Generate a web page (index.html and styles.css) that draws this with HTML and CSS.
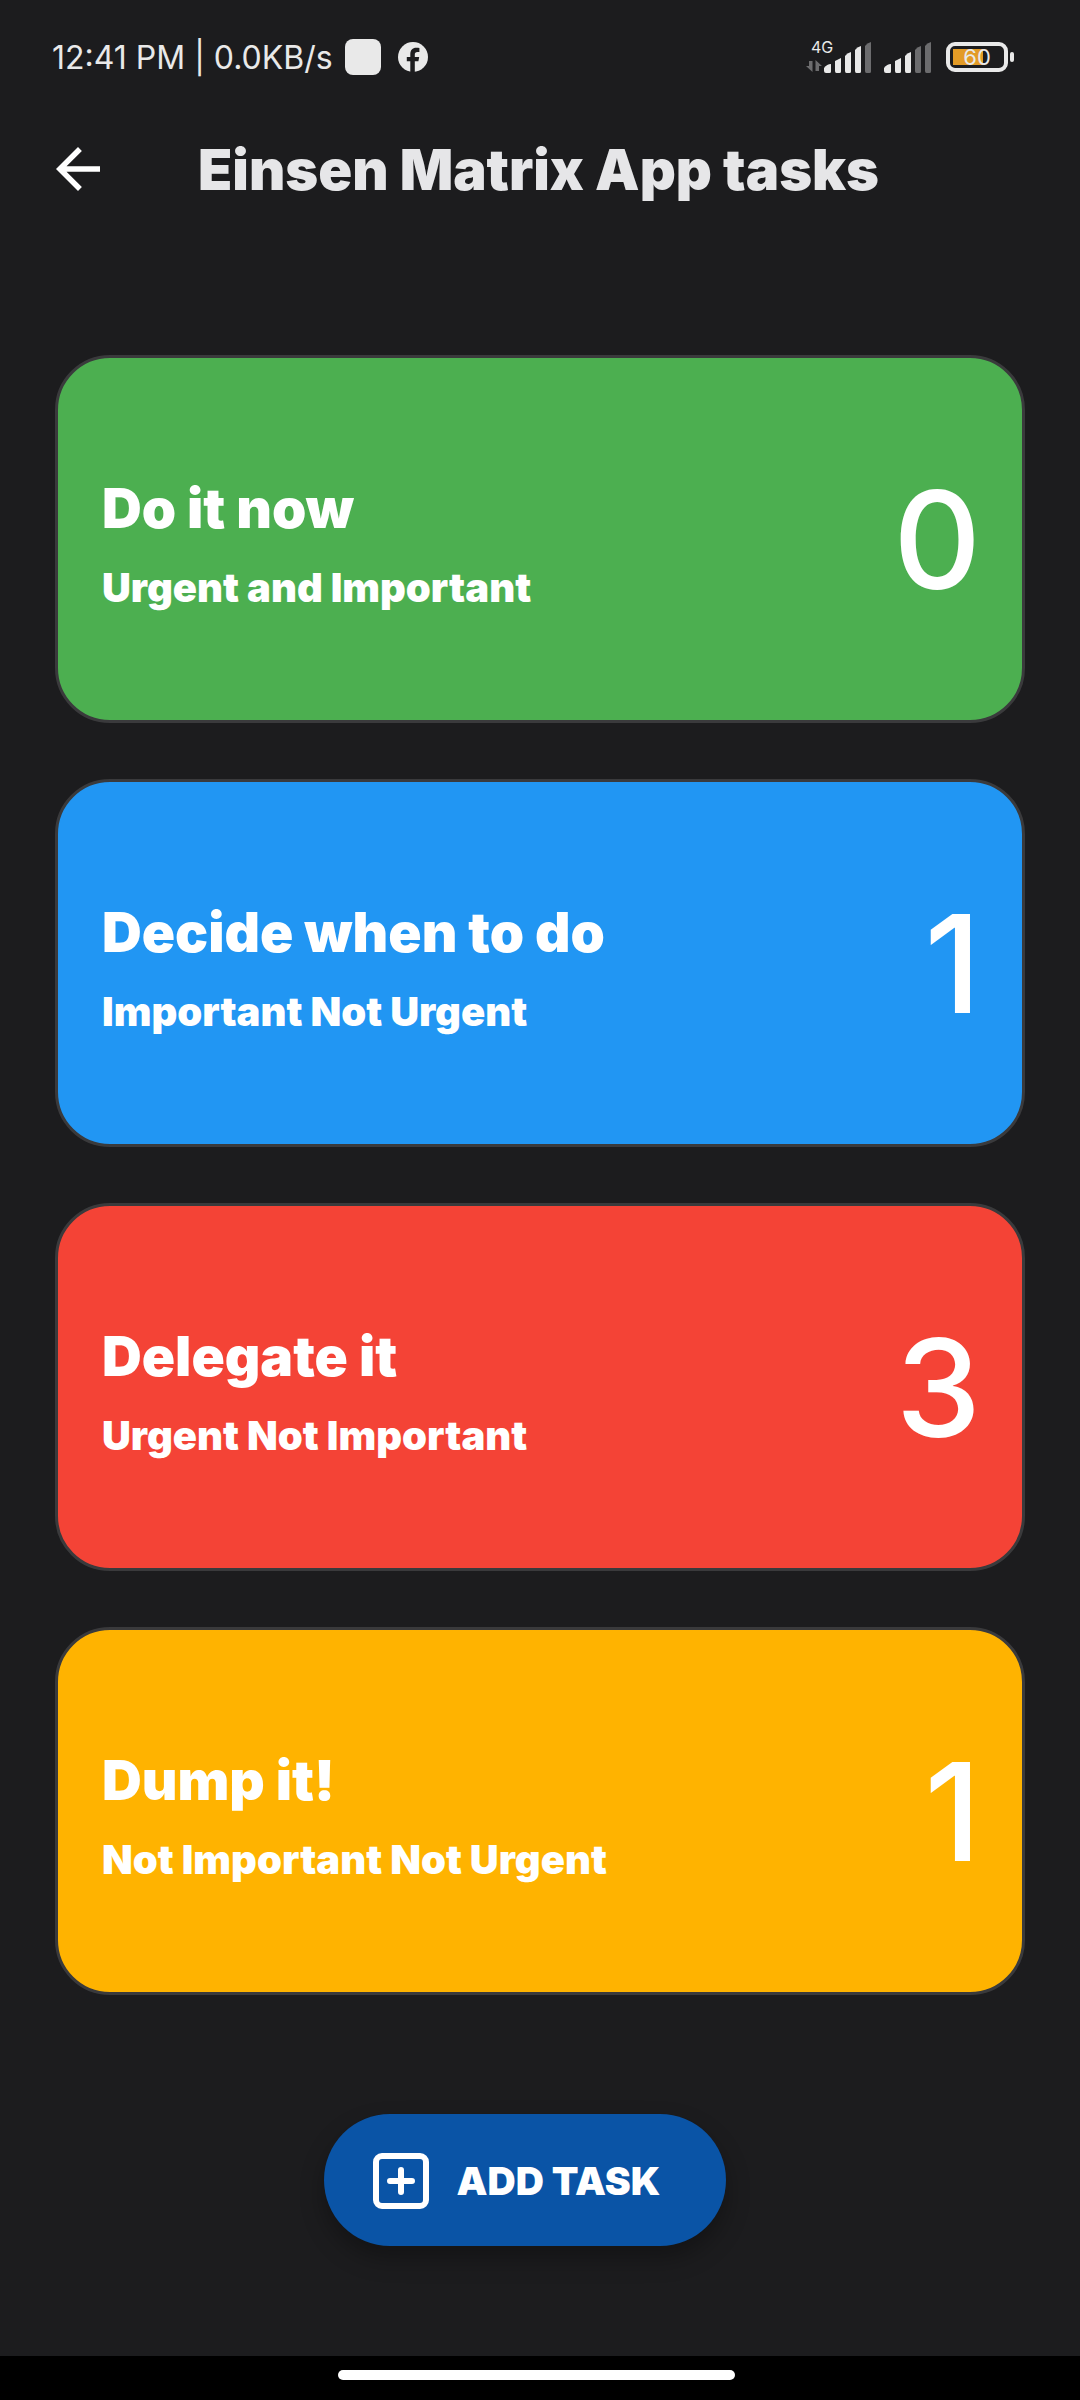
FILE: index.html
```html
<!DOCTYPE html>
<html lang="en">
<head>
<meta charset="utf-8">
<meta name="viewport" content="width=device-width, initial-scale=1">
<title>Einsen Matrix App tasks</title>
<link rel="stylesheet" href="styles.css">
</head>
<body>
<div class="screen">
  <div class="status">
    <span class="status-text">12:41 PM | 0.0KB/s</span>
    <span class="notice-square"></span>
    <svg class="facebook" viewBox="0 0 30 30" aria-hidden="true">
      <circle cx="15" cy="15" r="15" fill="#e9e9e9"/>
      <path d="M12.3 30V19.3H8.8v-4.4h3.5v-2.8c0-4 2.2-6.3 6-6.3 1.300 0 2.400.1 3.100.3v3.800h-1.900c-2 0-2.700.9-2.700 2.600v2.400h4.400l-.8 4.400h-3.600V30z" fill="#1c1c1e"/>
    </svg>
    <div class="indicators">
      <div class="network">
        <span class="network-type">4G</span>
        <svg class="arrows" viewBox="0 0 16 12" aria-hidden="true">
          <path d="M0 6h3V1h3.500v11zM9.500 0L16 6h-3v5H9.500z" fill="#6c6c6e"/>
        </svg>
      </div>
      <svg class="signal" viewBox="0 0 48 32" aria-hidden="true">
        <g fill="#e9e9e9">
          <path d="M0 30V27Q3 23 7 23V30.500Q7 32 5.500 32H2Q0 32 0 30z"/>
          <path d="M11 30V20L17 17V30.500Q17 32 15.500 32H12.500Q11 32 11 30z"/>
          <path d="M21 30V15Q23 12 27 11V30.500Q27 32 25.500 32H22.500Q21 32 21 30z"/>
          <path d="M31 30V9Q33 6 37 5V30.500Q37 32 35.500 32H32.500Q31 32 31 30z"/>
        </g>
        <path d="M41 30V5Q43 2 47 1V30.500Q47 32 45.500 32H42.500Q41 32 41 30z" fill="#6c6c6e"/>
      </svg>
      <svg class="signal signal-second" viewBox="0 0 48 32" aria-hidden="true">
        <g fill="#e9e9e9">
          <path d="M0 30V27Q3 23 7 23V30.500Q7 32 5.500 32H2Q0 32 0 30z"/>
          <path d="M11 30V20L17 17V30.500Q17 32 15.500 32H12.500Q11 32 11 30z"/>
          <path d="M21 30V15Q23 12 27 11V30.500Q27 32 25.500 32H22.500Q21 32 21 30z"/>
        </g>
        <g fill="#6c6c6e">
          <path d="M31 30V9Q33 6 37 5V30.500Q37 32 35.500 32H32.500Q31 32 31 30z"/>
          <path d="M41 30V5Q43 2 47 1V30.500Q47 32 45.500 32H42.500Q41 32 41 30z"/>
        </g>
      </svg>
      <div class="battery"><span class="battery-level">60</span></div>
      <span class="battery-tip"></span>
    </div>
  </div>

  <header class="app-bar">
    <button class="back" type="button" aria-label="Back">
      <svg class="back-icon" viewBox="4 4 16 16" aria-hidden="true">
        <path d="M20 11H7.830l5.590-5.590L12 4l-8 8 8 8 1.410-1.410L7.830 13H20v-2z" fill="#fff"/>
      </svg>
    </button>
    <h1 class="title">Einsen Matrix App tasks</h1>
  </header>

  <main class="cards">
    <a class="card do-now" href="#do-now">
      <span class="labels"><span class="name">Do it now</span><span class="detail">Urgent and Important</span></span>
      <span class="count">0</span>
    </a>
    <a class="card decide" href="#decide">
      <span class="labels"><span class="name">Decide when to do</span><span class="detail">Important Not Urgent</span></span>
      <span class="count">1</span>
    </a>
    <a class="card delegate" href="#delegate">
      <span class="labels"><span class="name">Delegate it</span><span class="detail">Urgent Not Important</span></span>
      <span class="count">3</span>
    </a>
    <a class="card dump" href="#dump">
      <span class="labels"><span class="name">Dump it!</span><span class="detail">Not Important Not Urgent</span></span>
      <span class="count">1</span>
    </a>
  </main>

  <div class="actions">
    <button class="add-task" type="button">
      <svg class="add-icon" viewBox="0 0 56 56" fill="none" stroke="#fff" stroke-width="6" aria-hidden="true">
        <rect x="3" y="3" width="50" height="50" rx="6"/>
        <path d="M28 17v22M17 28h22" stroke-linecap="round"/>
      </svg>
      ADD TASK
    </button>
  </div>

  <footer class="nav-bar"><span class="handle"></span></footer>
</div>
</body>
</html>
```

FILE: styles.css
```css
* {
  box-sizing: border-box;
}

body {
  margin: 0;
  background: #1c1c1e;
  font-family: Inter, sans-serif;
  color: #fff;
}

.screen {
  min-height: 100vh;
  display: flex;
  flex-direction: column;
}

.status {
  display: flex;
  align-items: center;
  height: 114px;
  padding: 0 66px 0 52px;
  color: #e9e9e9;
}

.status-text {
  padding-top: 2px;
  font-size: 32px;
  line-height: 40px;
}

.notice-square {
  width: 36px;
  height: 36px;
  margin: 0 17px 0 12px;
  border-radius: 8px;
  background: #e9e9e9;
}

.facebook {
  width: 30px;
  height: 30px;
}

.indicators {
  display: flex;
  align-items: center;
  margin-left: auto;
}

.network {
  display: flex;
  flex-direction: column;
  gap: 3px;
  width: 18px;
  padding-bottom: 5px;
}

.network-type {
  margin-left: 5px;
  font-size: 16px;
  line-height: 20px;
}

.arrows {
  width: 16px;
  height: 12px;
}

.signal {
  width: 48px;
  height: 32px;
}

.signal-second {
  margin: 0 14px 0 12px;
}

.battery {
  display: flex;
  align-items: center;
  justify-content: center;
  width: 62px;
  height: 30px;
  border: 4px solid #e9e9e9;
  border-radius: 9px;
  background: linear-gradient(#e39b26, #e39b26) 3px 3px / 30px 16px no-repeat;
}

.battery-level {
  font-size: 22px;
  line-height: 22px;
}

.battery-tip {
  width: 4px;
  height: 10px;
  margin-left: 2px;
  border-radius: 2px;
  background: #e9e9e9;
}

.app-bar {
  display: flex;
  align-items: center;
  height: 110px;
  padding-left: 56px;
}

.back {
  display: flex;
  padding: 0;
  border: 0;
  background: none;
}

.back-icon {
  width: 44px;
  height: 44px;
}

.title {
  margin: 0 0 0 98px;
  padding-top: 2px;
  font-size: 56px;
  font-weight: 900;
  line-height: 68px;
  color: #e6e6e8;
}

.cards {
  display: flex;
  flex-direction: column;
  gap: 56px;
  padding: 131px 55px 0;
}

.card {
  display: flex;
  align-items: center;
  justify-content: space-between;
  min-height: 368px;
  padding: 2px 41px 0 44px;
  border: 3px solid #3a3a3c;
  border-radius: 55px;
  color: #fff;
  text-decoration: none;
}

.do-now { background: #4caf50; }
.decide { background: #2196f3; }
.delegate { background: #f44336; }
.dump { background: #ffb300; }

.labels {
  display: flex;
  flex-direction: column;
  gap: 22px;
  padding-top: 6px;
}

.name {
  font-size: 55px;
  font-weight: 900;
  line-height: 68px;
}

.detail {
  font-size: 40px;
  font-weight: 900;
  line-height: 48px;
}

.count {
  font-size: 136px;
  font-weight: 500;
  line-height: 168px;
}

.actions {
  display: flex;
  justify-content: center;
  padding: 119px 30px 110px 0;
}

.add-task {
  display: flex;
  align-items: center;
  gap: 28px;
  height: 132px;
  padding: 2px 66px 0 49px;
  border: 0;
  border-radius: 66px;
  background: #0a54a6;
  box-shadow: 0 12px 24px rgba(0, 0, 0, 0.3);
  color: #fff;
  font-family: inherit;
  font-size: 39px;
  font-weight: 900;
  line-height: 48px;
}

.add-icon {
  width: 56px;
  height: 56px;
}

.nav-bar {
  display: flex;
  align-items: center;
  justify-content: center;
  height: 44px;
  margin-top: auto;
  padding: 0 7px 6px 0;
  background: #000;
}

.handle {
  width: 37%;
  height: 10px;
  border-radius: 5px;
  background: #fff;
}
```
